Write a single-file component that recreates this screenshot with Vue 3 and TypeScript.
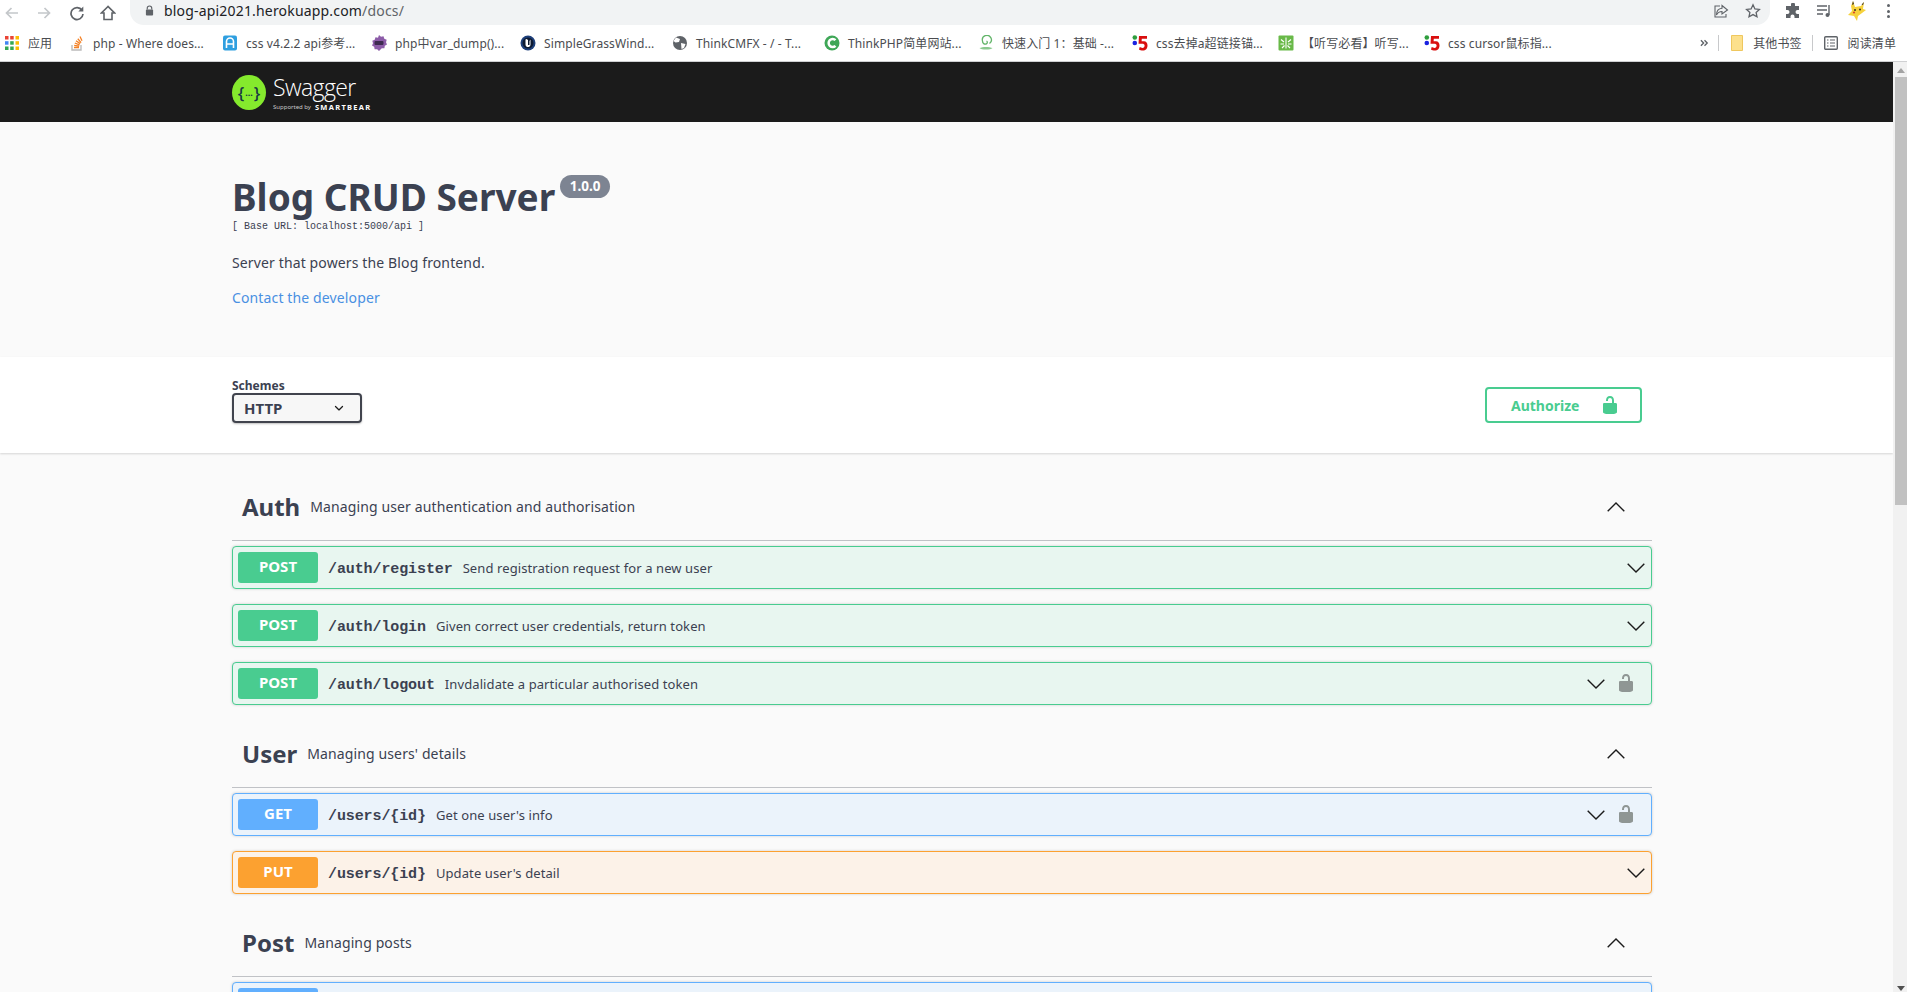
<script setup lang="ts">
interface Op {
  method: 'POST' | 'GET' | 'PUT'
  path: string
  desc: string
  locked?: boolean
}
interface Section {
  name: string
  desc: string
  ops: Op[]
}

// 书签栏，宽度取自每一项的实际占位
const bookmarks = [
  { icon: 'apps', label: '应用', w: 65 },
  { icon: 'so', label: 'php - Where does...', w: 153 },
  { icon: 'a', label: 'css v4.2.2 api参考...', w: 149 },
  { icon: 'php', label: 'php中var_dump()...', w: 149 },
  { icon: 'ue', label: 'SimpleGrassWind...', w: 152 },
  { icon: 'globe', label: 'ThinkCMFX - / - T...', w: 152 },
  { icon: 'c', label: 'ThinkPHP简单网站...', w: 154 },
  { icon: 'swirl', label: '快速入门 1：基础 -...', w: 154 },
  { icon: 'five', label: 'css去掉a超链接锚...', w: 146 },
  { icon: 'leaf', label: '【听写必看】听写...', w: 146 },
  { icon: 'five', label: 'css cursor鼠标指...', w: 130 }
]

const sections: Section[] = [
  {
    name: 'Auth',
    desc: 'Managing user authentication and authorisation',
    ops: [
      { method: 'POST', path: '/auth/register', desc: 'Send registration request for a new user' },
      { method: 'POST', path: '/auth/login', desc: 'Given correct user credentials, return token' },
      { method: 'POST', path: '/auth/logout', desc: 'Invdalidate a particular authorised token', locked: true }
    ]
  },
  {
    name: 'User',
    desc: "Managing users' details",
    ops: [
      { method: 'GET', path: '/users/{id}', desc: "Get one user's info", locked: true },
      { method: 'PUT', path: '/users/{id}', desc: "Update user's detail" }
    ]
  },
  {
    name: 'Post',
    desc: 'Managing posts',
    // 这一行在截图底部被裁掉，只露出蓝色的上边
    ops: [{ method: 'GET', path: '', desc: '' }]
  }
]

const lockPath =
  'M15.8 8H14V5.6C14 2.703 12.665 1 10 1 7.334 1 6 2.703 6 5.6V6h2v-.801C8 3.754 8.797 3 10 3c1.203 0 2 .754 2 2.199V8H4c-.553 0-1 .646-1 1.199V17c0 .549.428 1.139.951 1.307l1.197.387C5.672 18.861 6.45 19 7 19h6c.55 0 1.327-.139 1.85-.307l1.197-.387c.523-.167.953-.757.953-1.306V9.199C17 8.646 16.352 8 15.8 8z'
</script>

<template>
  <div class="window">
    <header class="toolbar">
      <div class="nav">
        <svg class="nav-icon" viewBox="0 0 16 16"><path d="M14 8H3M7.5 3 2.5 8l5 5" fill="none" stroke="#c4c7ca" stroke-width="1.7" /></svg>
        <svg class="nav-icon forward" viewBox="0 0 16 16"><path d="M2 8h11M8.500 3l5 5-5 5" fill="none" stroke="#c4c7ca" stroke-width="1.700" /></svg>
        <svg class="nav-icon reload" viewBox="0 0 16 16"><path d="M13 5.200A6 6 0 1 0 14 9" fill="none" stroke="#5f6368" stroke-width="1.700" /><path d="M14.300 1.500v5h-5z" fill="#5f6368" /></svg>
        <svg class="nav-icon home" viewBox="0 0 16 16"><path d="M8 1.500 1.500 8H4v6.500h8V8h2.500z" fill="none" stroke="#5f6368" stroke-width="1.600" /></svg>
      </div>
      <div class="omnibox">
        <svg class="omni-lock" viewBox="0 0 10 12"><path d="M2.500 5V3.500a2.500 2.500 0 0 1 5 0V5" fill="none" stroke="#5f6368" stroke-width="1.300" /><rect x="1" y="5" width="8" height="6.500" rx="1" fill="#5f6368" /></svg>
        <span class="url">blog-api2021.herokuapp.com<span class="url-path">/docs/</span></span>
        <svg class="omni-action" viewBox="0 0 16 16"><path d="M9 2.500 14.500 7 9 11V8.500C6 8.500 4.500 10 3.500 12 3.500 8 5.500 5.500 9 5.200z M7 3H2v11h11v-3" fill="none" stroke="#5f6368" stroke-width="1.100" /></svg>
        <svg class="omni-action star" viewBox="0 0 16 16"><path d="m8 1.800 1.900 4.100 4.500.5-3.300 3 .9 4.400L8 11.600l-4 2.200.9-4.400-3.300-3 4.500-.5z" fill="none" stroke="#5f6368" stroke-width="1.300" /></svg>
      </div>
      <div class="extensions">
        <svg class="ext puzzle" viewBox="0 0 16 16"><path d="M6 1.500a2 2 0 0 1 4 0V3h4v4h-1.500a2 2 0 0 0 0 4H14v4H9.500v-1.500a2 2 0 0 0-4 0V15H1v-4h1.500a2 2 0 0 0 0-4H1V3h5z" fill="#5f6368" /></svg>
        <svg class="ext media" viewBox="0 0 16 16"><path d="M1 3h10M1 7h10M1 11h6" stroke="#5f6368" stroke-width="1.400" /><path d="M13 2v10" stroke="#5f6368" stroke-width="1.400" /><circle cx="11.500" cy="12" r="2" fill="#5f6368" /></svg>
        <svg class="ext pika" viewBox="0 0 18 20"><path d="M5 0 7 6 13 5 16 1 15 8 18 9 14 12 10 15 9 20 6 15 0 14 4 10 3 5z" fill="#f6d23c" /><path d="M5 0 6 3 4 4zM16 1 15 4 13.500 3.500z" fill="#3a3020" /><circle cx="7" cy="9" r="1" fill="#3a3020" /><circle cx="12" cy="8.500" r="1" fill="#3a3020" /><circle cx="6" cy="11.500" r="1.100" fill="#d9482b" /></svg>
        <div class="dots"><i></i><i></i><i></i></div>
      </div>
    </header>

    <nav class="bookmarks">
      <div v-for="(b, i) in bookmarks" :key="i" class="bookmark" :style="{ width: b.w + 'px' }">
        <svg class="favicon" viewBox="0 0 16 16">
          <template v-if="b.icon === 'apps'">
            <rect x="1" y="1" width="3.500" height="3.500" fill="#ea4335" /><rect x="6.200" y="1" width="3.500" height="3.500" fill="#ea4335" /><rect x="11.500" y="1" width="3.500" height="3.500" fill="#fbbc04" />
            <rect x="1" y="6.200" width="3.500" height="3.500" fill="#4285f4" /><rect x="6.200" y="6.200" width="3.500" height="3.500" fill="#34a853" /><rect x="11.500" y="6.200" width="3.500" height="3.500" fill="#fbbc04" />
            <rect x="1" y="11.500" width="3.500" height="3.500" fill="#34a853" /><rect x="6.200" y="11.500" width="3.500" height="3.500" fill="#34a853" /><rect x="11.500" y="11.500" width="3.500" height="3.500" fill="#fbbc04" />
          </template>
          <template v-else-if="b.icon === 'so'">
            <path d="M3 10v5h9v-5" fill="none" stroke="#bcbbbb" stroke-width="1.400" />
            <path d="M5 12.500h5M5.200 10.300l5 .8M5.800 8l4.700 1.800M7 5.800l4.200 2.800M8.800 3.800l3.300 3.800M11 1.500l2 4.300" stroke="#f48024" stroke-width="1.300" />
          </template>
          <template v-else-if="b.icon === 'a'">
            <rect x="1" y="0.500" width="14" height="15" rx="2" fill="#2f9fe0" />
            <path d="M4.500 13V6.500a3.500 3.500 0 0 1 7 0V13M4.500 9h7" fill="none" stroke="#fff" stroke-width="1.600" />
          </template>
          <template v-else-if="b.icon === 'php'">
            <path d="m8 0 2 1.700 2.500-.5.800 2.500 2.400 1-.7 2.500 1 2.300-2.200 1.200-.4 2.600-2.600-.1L8 16l-1.800-1.800-2.600.1-.4-2.600L1 10.500l1-2.300-.7-2.500 2.400-1 .8-2.500 2.500.5z" fill="#8c5ca8" />
            <rect x="3.500" y="6" width="9" height="4" rx="1" fill="#3d2a50" />
          </template>
          <template v-else-if="b.icon === 'ue'">
            <circle cx="8" cy="8" r="7.500" fill="#1d3f7a" />
            <circle cx="8" cy="8" r="5.500" fill="#0d1b33" />
            <path d="M5.500 4.500v5c0 2 1.500 2.500 2.500 2.500s2.500-.5 2.500-2.500V4.500L9.500 6v4H8V5L6.500 4z" fill="#fff" />
          </template>
          <template v-else-if="b.icon === 'globe'">
            <circle cx="8" cy="8" r="7" fill="#5f6368" />
            <path d="M4 2.500 8 4 7 7 3.500 7.500 1.500 6zM9 8l4.500 1-1.500 4L9.500 14z" fill="#fff" />
          </template>
          <template v-else-if="b.icon === 'c'">
            <circle cx="8" cy="8" r="7.500" fill="#3fa757" />
            <path d="M11.500 5.200A4 4 0 1 0 11.500 10.800" fill="none" stroke="#fff" stroke-width="2.500" />
          </template>
          <template v-else-if="b.icon === 'swirl'">
            <path d="M11.500 8.500A4.500 4.500 0 1 0 4.500 6c0 2 1.500 3.500 3.500 3 1.500-.4 1.800-2.400.5-3" fill="none" stroke="#63b56a" stroke-width="1.300" />
            <path d="M1.500 13c3-1.500 10-1.500 13 0-2 2-11 2-13 0z" fill="#8bc98f" />
          </template>
          <template v-else-if="b.icon === 'five'">
            <circle cx="2.800" cy="2.500" r="2.300" fill="#2e9e3e" />
            <circle cx="2.800" cy="8" r="2.300" fill="#1a22e0" />
            <path d="M7 1h8v2.800h-5.200l-.2 2.400H12c2.200 0 3.500 1.800 3.500 4.200 0 3-1.800 5.100-4.700 5.100-1.500 0-3-.4-3.800-1l.7-2.400c.8.500 1.800.8 2.800.8 1.300 0 2.100-.9 2.100-2.300S11.600 8.800 10 8.800H6.500z" fill="#d90f0f" />
          </template>
          <template v-else>
            <rect x="0.500" y="0.500" width="15" height="15" rx="1" fill="#69b948" />
            <path d="M8 2.500v11M3 4.500l3 2.500M13 4.500 10 7M2.500 9h3.500M13.500 9H10M4 13l2.500-2.500M12 13l-2.500-2.500" stroke="#fff" stroke-width="1.100" />
          </template>
        </svg>
        <span class="bookmark-label">{{ b.label }}</span>
      </div>
      <div class="bookmarks-right">
        <svg class="more" viewBox="0 0 10 8"><path d="m1 1 3 3-3 3M5 1l3 3-3 3" fill="none" stroke="#5f6368" stroke-width="1.500" /></svg>
        <span class="sep"></span>
        <svg class="folder" viewBox="0 0 12 16"><path d="M.5.500h11v15H.5z" fill="#fce08c" stroke="#efc75e" /></svg>
        <span class="bookmark-label">其他书签</span>
        <span class="sep second"></span>
        <svg class="reading" viewBox="0 0 14 14"><rect x="0.700" y="0.700" width="12.600" height="12.600" rx="1" fill="none" stroke="#5f6368" stroke-width="1.400" /><path d="M3 4h1.500M6 4h5M3 7h1.500M6 7h5M3 10h1.500M6 10h5" stroke="#5f6368" stroke-width="1.200" /></svg>
        <span class="bookmark-label">阅读清单</span>
      </div>
    </nav>

    <div class="viewport">
      <main class="page">
        <div class="topbar">
          <div class="logo">
            <div class="logo-mark">{<b>...</b>}</div>
            <div class="logo-text">
              <span class="logo-name">Swagger</span>
              <span class="logo-sub"><small>Supported by</small> <strong>SMARTBEAR</strong></span>
            </div>
          </div>
        </div>

        <section class="info">
          <div class="title-row">
            <h1>Blog CRUD Server</h1>
            <span class="version">1.0.0</span>
          </div>
          <pre class="base-url">[ Base URL: localhost:5000/api ]</pre>
          <p class="desc">Server that powers the Blog frontend.</p>
          <a class="contact">Contact the developer</a>
        </section>

        <section class="schemes">
          <div class="schemes-field">
            <span class="schemes-label">Schemes</span>
            <div class="select">
              <span>HTTP</span>
              <svg viewBox="0 0 20 20"><path d="M13.418 7.859a.695.695 0 0 1 .978 0 .68.68 0 0 1 0 .969l-3.908 3.83a.697.697 0 0 1-.979 0l-3.908-3.83a.68.68 0 0 1 0-.969.695.695 0 0 1 .978 0L10 11z" fill="#1b1b1b" /></svg>
            </div>
          </div>
          <button class="authorize">
            <span>Authorize</span>
            <svg viewBox="0 0 20 20"><path :d="lockPath" fill="#49cc90" /></svg>
          </button>
        </section>

        <div class="wrapper">
          <section v-for="s in sections" :key="s.name" class="tag">
            <div class="tag-head">
              <h3>{{ s.name }}</h3>
              <span class="tag-desc">{{ s.desc }}</span>
              <svg class="tag-arrow" viewBox="0 0 18 10"><path d="m.7 9.300 8.300-8.300 8.300 8.300" fill="none" stroke="#1b1b1b" stroke-width="1.400" /></svg>
            </div>
            <div v-for="op in s.ops" :key="op.method + op.path" class="op" :class="op.method.toLowerCase()">
              <span class="method">{{ op.path ? op.method : '' }}</span>
              <span class="path">{{ op.path }}</span>
              <span class="op-desc">{{ op.desc }}</span>
              <svg class="op-arrow" viewBox="0 0 18 10"><path d="m.7.700 8.300 8.300 8.300-8.300" fill="none" stroke="#1b1b1b" stroke-width="1.400" /></svg>
              <svg v-if="op.locked" class="op-lock" viewBox="3 1 14 18"><path :d="lockPath" fill="#8f9694" /></svg>
            </div>
          </section>
        </div>
      </main>

      <aside class="scrollbar">
        <i class="arrow up"></i>
        <div class="thumb"></div>
        <i class="arrow down"></i>
      </aside>
    </div>
  </div>
</template>

<style>
html,
body {
  margin: 0;
  height: 100%;
  overflow: hidden;
}
</style>

<style scoped>
.window {
  display: flex;
  flex-direction: column;
  width: 1907px;
  height: 992px;
  overflow: hidden;
  font-family: 'Noto Sans', 'Noto Sans CJK SC', sans-serif;
  color: #3b4151;
  background: #fff;
}

/* 浏览器外壳 */
.toolbar {
  display: flex;
  align-items: center;
  height: 25px;
  flex: none;
  padding-left: 4px;
}

.nav {
  display: flex;
  align-items: center;
  width: 126px;
}

.nav-icon {
  width: 16px;
  height: 16px;
}

.forward {
  margin-left: 16px;
}

.reload {
  margin-left: 17px;
}

.home {
  margin-left: 15px;
}

.omnibox {
  display: flex;
  align-items: center;
  width: 1640px;
  height: 25px;
  padding: 0 0 4px 15px;
  box-sizing: border-box;
  background: #f1f3f4;
  border-radius: 0 0 14px 14px;
}

.omni-lock {
  width: 9px;
  height: 11px;
  margin-right: 10px;
}

.url {
  font-size: 14px;
  color: #202124;
  letter-spacing: 0.18px;
}

.url-path {
  color: #5f6368;
}

.omni-action {
  width: 16px;
  height: 16px;
  margin-left: auto;
  margin-right: 16px;
}

.omni-action.star {
  margin-left: 0;
  margin-right: 9px;
}

.extensions {
  display: flex;
  align-items: center;
  padding-left: 15px;
  padding-bottom: 3px;
}

.ext {
  width: 16px;
  height: 16px;
}

.media {
  margin-left: 15px;
}

.pika {
  width: 18px;
  height: 20px;
  margin-left: 16px;
}

.dots {
  display: flex;
  flex-direction: column;
  gap: 2.500px;
  margin-left: 21px;
}

.dots i {
  width: 3px;
  height: 3px;
  border-radius: 50%;
  background: #5f6368;
}

.bookmarks {
  display: flex;
  align-items: center;
  height: 36px;
  flex: none;
  padding-left: 4px;
  border-bottom: 1px solid #cfd0d2;
  font-size: 12px;
  letter-spacing: 0.1px;
  color: #4a4c50;
}

.bookmark {
  display: flex;
  align-items: center;
  gap: 8px;
  flex: none;
  white-space: nowrap;
  overflow: hidden;
}

.favicon {
  width: 16px;
  height: 16px;
  flex: none;
}

.bookmarks-right {
  display: flex;
  align-items: center;
  margin-left: auto;
  padding-right: 11px;
}

.more {
  width: 9px;
  height: 8px;
}

.sep {
  width: 1px;
  height: 16px;
  margin: 0 12px 0 9px;
  background: #c8c9cb;
}

.sep.second {
  margin: 0 11px 0 10px;
}

.folder {
  width: 12px;
  height: 16px;
  margin-right: 10px;
}

.reading {
  width: 14px;
  height: 14px;
  margin-right: 10px;
}

/* 页面内容 */
.viewport {
  display: flex;
  flex: 1;
  min-height: 0;
}

.page {
  flex: 1;
  min-width: 0;
  overflow: hidden;
  background: #fafafa;
}

.topbar {
  display: flex;
  align-items: center;
  height: 60px;
  padding-left: 232px;
  background: #1b1b1b;
}

.logo {
  display: flex;
  align-items: center;
  gap: 7px;
}

.logo-mark {
  display: flex;
  align-items: center;
  justify-content: center;
  width: 34px;
  height: 35px;
  border-radius: 50%;
  background: #85ea2d;
  color: #173646;
  font-size: 17px;
  font-weight: 500;
  line-height: 1;
}

.logo-mark b {
  font-size: 9px;
  margin: 0 1px;
}

.logo-text {
  display: flex;
  flex-direction: column;
  color: #fff;
}

.logo-name {
  font-family: 'Open Sans', sans-serif;
  font-size: 23px;
  font-weight: 300;
  line-height: 26px;
  letter-spacing: -0.6px;
}

.logo-sub {
  display: flex;
  align-items: center;
  gap: 4px;
  margin-top: 3px;
  line-height: 8px;
  white-space: nowrap;
}

.logo-sub small {
  font-size: 6px;
  color: #c8c8c8;
}

.logo-sub strong {
  font-size: 7.5px;
  letter-spacing: 1.3px;
}

.info {
  height: 235px;
  padding: 51px 0 0 232px;
  box-sizing: border-box;
}

.title-row {
  display: flex;
  align-items: flex-start;
}

h1 {
  margin: 0;
  font-size: 37px;
  font-weight: 700;
  line-height: 48px;
  color: #3b4151;
}

.version {
  margin: 2px 0 0 5px;
  width: 50px;
  height: 23px;
  border-radius: 12px;
  background: #7d8492;
  color: #fff;
  font-size: 13.5px;
  font-weight: 700;
  line-height: 22px;
  text-align: center;
}

.base-url {
  margin: 0;
  font-family: 'Liberation Mono', monospace;
  font-size: 10px;
  line-height: 12px;
  color: #3b4151;
}

.desc {
  margin: 20px 0 0;
  font-size: 14px;
  line-height: 20px;
  letter-spacing: 0.13px;
}

.contact {
  display: block;
  margin-top: 15px;
  font-size: 14px;
  line-height: 20px;
  letter-spacing: 0.13px;
  color: #4990e2;
}

.schemes {
  position: relative;
  display: flex;
  align-items: flex-end;
  justify-content: space-between;
  height: 96px;
  padding: 0 251px 30px 232px;
  box-sizing: border-box;
  background: #fff;
  box-shadow: 0 1px 2px 0 rgba(0, 0, 0, 0.15);
}

.schemes-field {
  display: flex;
  flex-direction: column;
}

.schemes-label {
  font-size: 12px;
  font-weight: 700;
  line-height: 15px;
}

.select {
  display: flex;
  align-items: center;
  justify-content: space-between;
  width: 130px;
  height: 30px;
  padding: 0 12px 0 10px;
  box-sizing: border-box;
  border: 2px solid #41444e;
  border-radius: 4px;
  background: #f7f7f7;
  box-shadow: 0 1px 2px 0 rgba(0, 0, 0, 0.25);
  font-size: 15px;
  font-weight: 700;
}

.select svg {
  width: 18px;
  height: 18px;
  margin-right: 0;
}

.authorize {
  display: flex;
  align-items: center;
  gap: 21px;
  width: 157px;
  height: 36px;
  padding: 0 0 0 24px;
  box-sizing: border-box;
  border: 2px solid #49cc90;
  border-radius: 4px;
  background: transparent;
  color: #49cc90;
  font-family: inherit;
  font-size: 14px;
  font-weight: 700;
}

.authorize svg {
  width: 20px;
  height: 20px;
}

.wrapper {
  width: 1420px;
  margin-left: 232px;
  padding-top: 20px;
}

.tag-head {
  display: flex;
  align-items: center;
  height: 67px;
  margin-bottom: 5px;
  padding: 0 25px 0 10px;
  border-bottom: 1px solid rgba(59, 65, 81, 0.3);
}

h3 {
  margin: 0;
  font-size: 24px;
  font-weight: 700;
  line-height: 32px;
}

.tag-desc {
  margin-left: 10px;
  font-size: 14px;
  letter-spacing: 0.12px;
}

.tag-arrow {
  width: 18px;
  height: 10px;
  margin-left: auto;
  margin-right: 2px;
}

.op {
  display: flex;
  align-items: center;
  height: 43px;
  margin-bottom: 15px;
  padding: 0 6px 0 5px;
  box-sizing: border-box;
  border: 1px solid;
  border-radius: 4px;
  box-shadow: 0 0 3px rgba(0, 0, 0, 0.19);
}

.op.post {
  border-color: #49cc90;
  background: #e8f6f0;
}

.op.post .method {
  background: #49cc90;
}

.op.get {
  border-color: #61affe;
  background: #ebf3fb;
}

.op.get .method {
  background: #61affe;
}

.op.put {
  border-color: #fca130;
  background: #fcf2e8;
}

.op.put .method {
  background: #fca130;
}

.method {
  flex: none;
  width: 80px;
  height: 31px;
  border-radius: 3px;
  color: #fff;
  font-size: 15px;
  font-weight: 700;
  line-height: 28px;
  text-align: center;
}

.path {
  flex: none;
  margin: 3px 0 0 10px;
  font-family: 'Liberation Mono', monospace;
  font-size: 15px;
  font-weight: 700;
  letter-spacing: -0.1px;
}

.op-desc {
  margin-left: 10px;
  font-size: 13px;
  letter-spacing: 0.1px;
}

.op-arrow {
  flex: none;
  width: 18px;
  height: 10px;
  margin-left: auto;
}

.op-lock {
  flex: none;
  width: 14px;
  height: 18px;
  margin: -2px 12px 0 14px;
}

/* 滚动条 */
.scrollbar {
  display: flex;
  flex-direction: column;
  align-items: flex-end;
  flex: none;
  width: 14px;
  background: #f1f1f1;
}

.thumb {
  width: 12px;
  height: 428px;
  margin-top: 4px;
  background: #c1c1c1;
}

.arrow {
  width: 0;
  height: 0;
  margin-right: 2px;
  border-left: 4px solid transparent;
  border-right: 4px solid transparent;
}

.arrow.up {
  margin-top: 6px;
  border-bottom: 5px solid #a3a3a3;
}

.arrow.down {
  margin-top: auto;
  margin-bottom: 1px;
  border-top: 5px solid #505050;
}
</style>
